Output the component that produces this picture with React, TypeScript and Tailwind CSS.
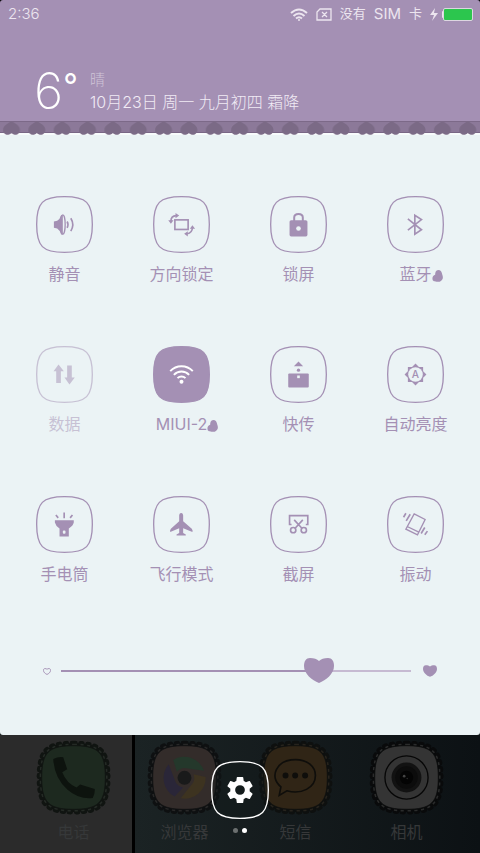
import { useState } from "react";
import type { ReactNode } from "react";
import clsx from "clsx";

const HEART = "M15 3C17 1 20 0 24 0C28 0 30 3 30 8C30 16 22 22 15 25C8 22 0 16 0 8C0 3 2 0 6 0C10 0 13 1 15 3Z";
const SQUIRCLE = "M86 2C152 2 170 20 170 86C170 152 152 170 86 170C20 170 2 152 2 86C2 20 20 2 86 2Z";

const MAX_BRIGHTNESS = 255;

type Toggle = {
  id: string;
  label: string;
  icon: ReactNode;
  active?: boolean;
  disabled?: boolean;
  more?: boolean;
};

// Every glyph is drawn on the 172-unit tile canvas
const toggles: Toggle[] = [
  {
    id: "mute",
    label: "静音",
    icon: (
      <>
        <path d="M54 77L64 75Q72 70 76 57H82V116H76Q72 103 64 98L54 96Z" fill="currentColor" />
        <ellipse cx="81" cy="86" rx="7" ry="29" fill="#ebf3f5" stroke="currentColor" strokeWidth="4" />
        <path d="M81 57Q74 64 74 86T81 115Z" fill="currentColor" />
        <path d="M94 77Q99 86 94 96M105 67Q117 86 105 106" fill="none" stroke="currentColor" strokeWidth="5" />
      </>
    ),
  },
  {
    id: "rotate",
    label: "方向锁定",
    icon: (
      <>
        <rect x="66" y="72" width="40" height="29" fill="none" stroke="currentColor" strokeWidth="5" />
        <path d="M54 76Q54 60 70 59M119 96Q118 112 103 114" fill="none" stroke="currentColor" strokeWidth="5" />
        <path d="M46 73H62L54 84ZM68 51V67L79 59ZM111 99H127L119 88ZM105 106V122L94 114Z" fill="currentColor" />
      </>
    ),
  },
  {
    id: "lock",
    label: "锁屏",
    icon: (
      <>
        <path d="M73 76V65Q73 54 86 54T99 65V76" fill="none" stroke="currentColor" strokeWidth="6" />
        <rect x="59" y="73" width="54" height="49" rx="5" fill="currentColor" />
        <circle cx="86" cy="98" r="7" fill="#ebf3f5" />
      </>
    ),
  },
  {
    id: "bluetooth",
    label: "蓝牙",
    more: true,
    icon: <path d="M63 69L104 102L84 115V58L104 71L63 103" fill="none" stroke="currentColor" strokeWidth="5" />,
  },
  {
    id: "data",
    label: "数据",
    disabled: true,
    icon: (
      <path
        d="M68 56L84 76H75V112H61V76H53ZM94 59H108V95H117L101 116L86 95H94Z"
        fill="currentColor"
      />
    ),
  },
  {
    id: "wifi",
    label: "MIUI-2",
    active: true,
    more: true,
    icon: (
      <>
        <path
          d="M52 76A47 47 0 0 1 120 76M63 87A32 32 0 0 1 109 87M74 97A17 17 0 0 1 98 97"
          fill="none"
          stroke="currentColor"
          strokeWidth="6"
        />
        <circle cx="86" cy="108" r="6" fill="currentColor" />
      </>
    ),
  },
  {
    id: "send",
    label: "快传",
    icon: (
      <>
        <path d="M86 47L100 61H72Z" fill="currentColor" />
        <circle cx="86" cy="73" r="5" fill="currentColor" />
        <rect x="55" y="83" width="62" height="42" rx="3" fill="currentColor" />
        <rect x="82" y="89" width="8" height="8" fill="#ebf3f5" />
      </>
    ),
  },
  {
    id: "brightness",
    label: "自动亮度",
    icon: (
      <>
        <path d="M63 63H109V109H63ZM86 53L119 86L86 119L53 86Z" fill="currentColor" />
        <circle cx="86" cy="86" r="22" fill="#ebf3f5" />
        <text x="86" y="97" textAnchor="middle" fontSize="31" fontWeight="500" fill="currentColor">
          A
        </text>
      </>
    ),
  },
  {
    id: "torch",
    label: "手电筒",
    icon: (
      <>
        <path d="M57 73H114V80Q112 90 99 98V122H71V98Q59 90 57 80Z" fill="currentColor" />
        <rect x="81" y="104" width="8" height="10" rx="3" fill="#ebf3f5" />
        <path d="M85 50V67M60 57L67 66M110 57L103 66" stroke="currentColor" strokeWidth="5" />
      </>
    ),
  },
  {
    id: "flight",
    label: "飞行模式",
    icon: (
      <path
        d="M85 51C89 51 91 55 91 59V76L117 99Q121 104 119 109L91 97V112L99 116V119H71V116L79 112V97L52 109Q50 104 54 99L79 76V59C79 55 81 51 85 51Z"
        fill="currentColor"
      />
    ),
  },
  {
    id: "screenshot",
    label: "截屏",
    icon: (
      <g fill="none" stroke="currentColor" strokeWidth="5">
        <path d="M65 86H59V59H114V86H108M73 72L97 98M99 72L75 98" />
        <circle cx="70" cy="103" r="8" />
        <circle cx="102" cy="103" r="8" />
      </g>
    ),
  },
  {
    id: "vibrate",
    label: "振动",
    icon: (
      <g fill="none" stroke="currentColor" strokeWidth="4">
        <path d="M82 54L115 71L92 117L57 100ZM61 92L96 109" />
        <path d="M50 64L57 52M58 75L70 55M103 113L114 95M114 117L122 106" strokeWidth="5" />
      </g>
    ),
  },
];

const dockApps = [
  {
    label: "电话",
    fill: "#1d291f",
    edge: "#101411",
    stitch: "#242a25",
    art: (
      <path
        d="M52 57Q67 50 82 52L94 88L79 97Q92 130 122 143L133 134L177 148Q178 163 171 175Q130 180 95 150Q55 115 52 57Z"
        fill="#0d130e"
      />
    ),
  },
  {
    label: "浏览器",
    fill: "#332c2a",
    edge: "#0e1011",
    stitch: "#272727",
    art: (
      <>
        <path d="M79 60A63 63 0 0 1 172 93L113 84Q98 85 90 96Z" fill="#24382b" />
        <path d="M79 60A63 63 0 0 1 172 93L113 84Q98 85 90 96Z" fill="#3d3320" transform="rotate(120 113 114)" />
        <path d="M79 60A63 63 0 0 1 172 93L113 84Q98 85 90 96Z" fill="#2a2638" transform="rotate(240 113 114)" />
        <circle cx="113" cy="114" r="21" fill="#191a1a" />
      </>
    ),
  },
  {
    label: "短信",
    fill: "#302516",
    edge: "#0e100f",
    stitch: "#26231d",
    art: (
      <>
        <path
          d="M64 167L69 141C32 112 55 59 113 59C149 59 173 80 173 107C173 145 130 165 87 153Z"
          fill="none"
          stroke="#0f0e0b"
          strokeWidth="5"
        />
        <circle cx="83" cy="107" r="9" fill="#0f0e0b" />
        <circle cx="112" cy="107" r="9" fill="#0f0e0b" />
        <circle cx="142" cy="107" r="9" fill="#0f0e0b" />
      </>
    ),
  },
  {
    label: "相机",
    fill: "#343434",
    edge: "#090a0b",
    stitch: "#2a2b2b",
    art: (
      <>
        <circle cx="113" cy="113" r="65" fill="none" stroke="#060606" strokeWidth="4" />
        <circle cx="113" cy="113" r="45" fill="#121212" />
        <circle cx="113" cy="113" r="34" fill="#0c0c0c" />
        <circle cx="113" cy="113" r="20" fill="#040404" />
        <circle cx="106" cy="109" r="4" fill="#444" />
        <circle cx="115" cy="116" r="2" fill="#333" />
      </>
    ),
  },
];

function StatusBar() {
  return (
    <div className="flex h-7 items-center justify-between pl-2 pr-[7px] text-[15px] text-[#ece5ef]">
      <span className="font-light">2:36</span>
      <div className="flex items-center gap-2">
        <svg viewBox="0 0 18 13" className="h-[13px] w-[18px]" fill="none" stroke="currentColor" strokeWidth="2">
          <path d="M1 5Q9-2 17 5M3.500 8Q9 3 14.500 8M6 10.500Q9 8 12 10.500" />
          <circle cx="9" cy="12" r="1" fill="currentColor" stroke="none" />
        </svg>
        <svg viewBox="0 0 16 13" className="h-[13px] w-4" fill="none" stroke="currentColor" strokeWidth="1.3">
          <path d="M4 1H15V12H1V4ZM6 4L11 9M11 4L6 9" />
        </svg>
        <span className="text-[13px]">没有</span>
        <span>SIM</span>
        <span className="text-[13px]">卡</span>
        <div className="flex items-center gap-1">
          <svg viewBox="0 0 8 13" className="h-[13px] w-2" fill="currentColor">
            <path d="M5 0L0 7H4L2 13L8 5H4Z" />
          </svg>
          <svg viewBox="0 0 31 13" className="h-[13px] w-[31px]">
            <rect y="3" width="3" height="7" rx="1" fill="#ece5ef" />
            <rect x="1.5" y=".5" width="29" height="12" rx="1.5" fill="#2cc64e" stroke="#ddd6e1" />
          </svg>
        </div>
      </div>
    </div>
  );
}

function LaceTrim() {
  return (
    <svg className="block h-[14px] w-full" aria-hidden="true">
      <defs>
        <pattern id="lace" x="-1" width="25.35" height="14" patternUnits="userSpaceOnUse">
          <path
            d="M12.5 0C15 2 21 4 21 9C21 11 20 12 19.500 12.500C18 14.500 14 14 12.500 12C11 14 7 14.500 5.500 12.500C4 12 4 10 4 9C4 4 10 2 12.500 0Z"
            fill="#7b6a86"
          />
        </pattern>
      </defs>
      <rect width="100%" height="12" fill="#8c7999" />
      <rect width="100%" height="1" fill="#7c6988" />
      <rect y="11" width="100%" height="1" fill="#796685" />
      <rect y="12" width="100%" height="2" fill="#f8fbfc" />
      <rect width="100%" height="14" fill="url(#lace)" />
    </svg>
  );
}

function ToggleTile({ item, onToggle }: { item: Toggle; onToggle: () => void }) {
  return (
    <button
      type="button"
      onClick={onToggle}
      disabled={item.disabled}
      aria-pressed={!!item.active}
      className={clsx("flex flex-col items-center gap-[9px] text-[#a490b4]", item.disabled && "opacity-50")}
    >
      <svg viewBox="0 0 172 172" className="size-[57px]">
        <path d={SQUIRCLE} fill={item.active ? "currentColor" : "none"} stroke="currentColor" strokeWidth="4" />
        <g className={item.active ? "text-white" : ""}>{item.icon}</g>
      </svg>
      <span className="relative text-base leading-6">
        {item.label}
        {item.more && (
          <svg viewBox="0 0 32 36" className="absolute bottom-1 left-full h-3 w-[11px]" fill="currentColor">
            <path d="M18 0C26 0 29 6 30 13C33 21 33 27 29 30C26 35 22 36 16 35C8 35 1 34 1 27C0 20 4 15 9 14C9 7 11 1 18 0Z" />
          </svg>
        )}
      </span>
    </button>
  );
}

function BrightnessSlider() {
  const [value, setValue] = useState(188);
  const percent = (value / MAX_BRIGHTNESS) * 100;

  return (
    <div className="flex items-center px-[43px] text-[#a490b4]">
      <svg viewBox="-2 -2 34 29" className="h-[7px] w-2" fill="none" stroke="currentColor" strokeWidth="4">
        <path d={HEART} />
      </svg>
      <div className="relative ml-[10px] mr-3 h-[26px] flex-1">
        <div className="flex h-full items-center">
          <div className="h-[2px] w-full bg-[#c6bad2]">
            <div className="h-full bg-[#a490b4]" style={{ width: `${percent}%` }} />
          </div>
        </div>
        <svg
          viewBox="0 0 30 25"
          className="absolute top-0 h-[25px] w-[30px] -translate-x-1/2"
          style={{ left: `${percent}%` }}
          fill="currentColor"
        >
          <path d={HEART} />
        </svg>
        <input
          type="range"
          min={0}
          max={MAX_BRIGHTNESS}
          value={value}
          onChange={(e) => setValue(Number(e.target.value))}
          aria-label="亮度"
          className="absolute inset-0 h-full w-full cursor-pointer opacity-0"
        />
      </div>
      <svg viewBox="0 0 30 25" className="h-3 w-[14px]" fill="currentColor">
        <path d={HEART} />
      </svg>
    </div>
  );
}

function Dock() {
  return (
    <footer className="relative flex-1 bg-[linear-gradient(to_right,#2b2b2b_132px,#000_132px,#000_135px,#1b2324_135px,#0c1114)]">
      <div className="grid grid-cols-4 px-[18px] pb-2 pt-[5px]">
        {dockApps.map((app) => (
          <a key={app.label} href="#" className="flex flex-col items-center gap-[5px] text-base leading-6 text-[#363839]">
            <svg viewBox="0 0 226 226" className="size-[75px]">
              <g transform="translate(7 7) scale(1.235)">
                <path
                  d={SQUIRCLE}
                  fill={app.edge}
                  stroke={app.edge}
                  strokeWidth="12"
                  strokeLinecap="round"
                  strokeDasharray="4 13"
                />
              </g>
              <g transform="translate(11 11) scale(1.19)">
                <path d={SQUIRCLE} fill="none" stroke={app.stitch} strokeWidth="4" strokeDasharray="8 9" />
              </g>
              <g transform="translate(15 15) scale(1.14)">
                <path d={SQUIRCLE} fill={app.fill} stroke={app.edge} strokeWidth="2" />
              </g>
              {app.art}
            </svg>
            {app.label}
          </a>
        ))}
      </div>

      <div className="absolute inset-x-0 top-[26px] flex flex-col items-center gap-[9px]">
        <button type="button" aria-label="设置">
          <svg viewBox="0 0 172 172" className="size-[58px]">
            <path d={SQUIRCLE} fill="#12191a" fillOpacity=".4" stroke="#fff" strokeWidth="4" />
            <g transform="translate(38 38) scale(4)">
              <path
                d="M19.140 12.940c.04-.3.060-.610.060-.940 0-.320-.02-.640-.07-.940l2.030-1.580a.49.49 0 0 0 .120-.610l-1.920-3.320a.488.488 0 0 0-.590-.220l-2.390.960c-.5-.380-1.030-.7-1.620-.940L14.400 2.810a.484.484 0 0 0-.480-.410h-3.840c-.240 0-.430.170-.470.410L9.250 5.350c-.590.240-1.130.570-1.620.940l-2.390-.960a.479.479 0 0 0-.590.220L2.740 8.870c-.120.210-.08.470.120.610l2.030 1.580c-.05.3-.09.630-.09.940s.020.640.070.940l-2.030 1.580a.49.49 0 0 0-.120.610l1.920 3.320c.120.220.370.290.590.220l2.390-.960c.5.380 1.030.7 1.620.940l.360 2.540c.050.240.240.410.480.410h3.840c.240 0 .440-.170.470-.410l.360-2.540c.590-.240 1.130-.560 1.620-.940l2.390.960c.220.080.470 0 .590-.220l1.920-3.320a.48.48 0 0 0-.120-.610zM12 15.600A3.600 3.600 0 1 1 12 8.400a3.600 3.600 0 0 1 0 7.200z"
                fill="#fff"
              />
            </g>
          </svg>
        </button>
        <div className="flex gap-1">
          <span className="size-[5px] rounded-full bg-[#6c7070]" />
          <span className="size-[5px] rounded-full bg-white" />
        </div>
      </div>
    </footer>
  );
}

export default function App() {
  const [items, setItems] = useState(toggles);

  const toggle = (id: string) => {
    setItems((prev) => prev.map((i) => (i.id === id ? { ...i, active: !i.active } : i)));
  };

  return (
    <div className="flex min-h-screen flex-col bg-black font-['Inter','Noto_Sans_CJK_SC',sans-serif] antialiased">
      <header className="rounded-t-[3px] bg-[#a490b4] pb-[5px]">
        <StatusBar />
        <div className="mt-[38px] flex items-center pl-[34px] text-white">
          <div className="flex w-14 items-start text-[50px] font-extralight leading-none">
            6<span className="text-[32px] font-normal leading-10">°</span>
          </div>
          <div className="text-base font-light leading-[22px] text-[#f1ebf4]">
            <p className="text-[15px] text-[#d0c5d8]">晴</p>
            <p>10月23日 周一 九月初四 霜降</p>
          </div>
        </div>
      </header>

      <div className="bg-[#12191a]">
        <main className="rounded-b-[3px] bg-[#ebf3f5] pb-[51px]">
          <LaceTrim />
          <div className="mb-[72px] mt-[61px] grid grid-cols-4 gap-y-[60px] px-[6px]">
            {items.map((item) => (
              <ToggleTile key={item.id} item={item} onToggle={() => toggle(item.id)} />
            ))}
          </div>
          <BrightnessSlider />
        </main>
      </div>

      <Dock />
    </div>
  );
}
